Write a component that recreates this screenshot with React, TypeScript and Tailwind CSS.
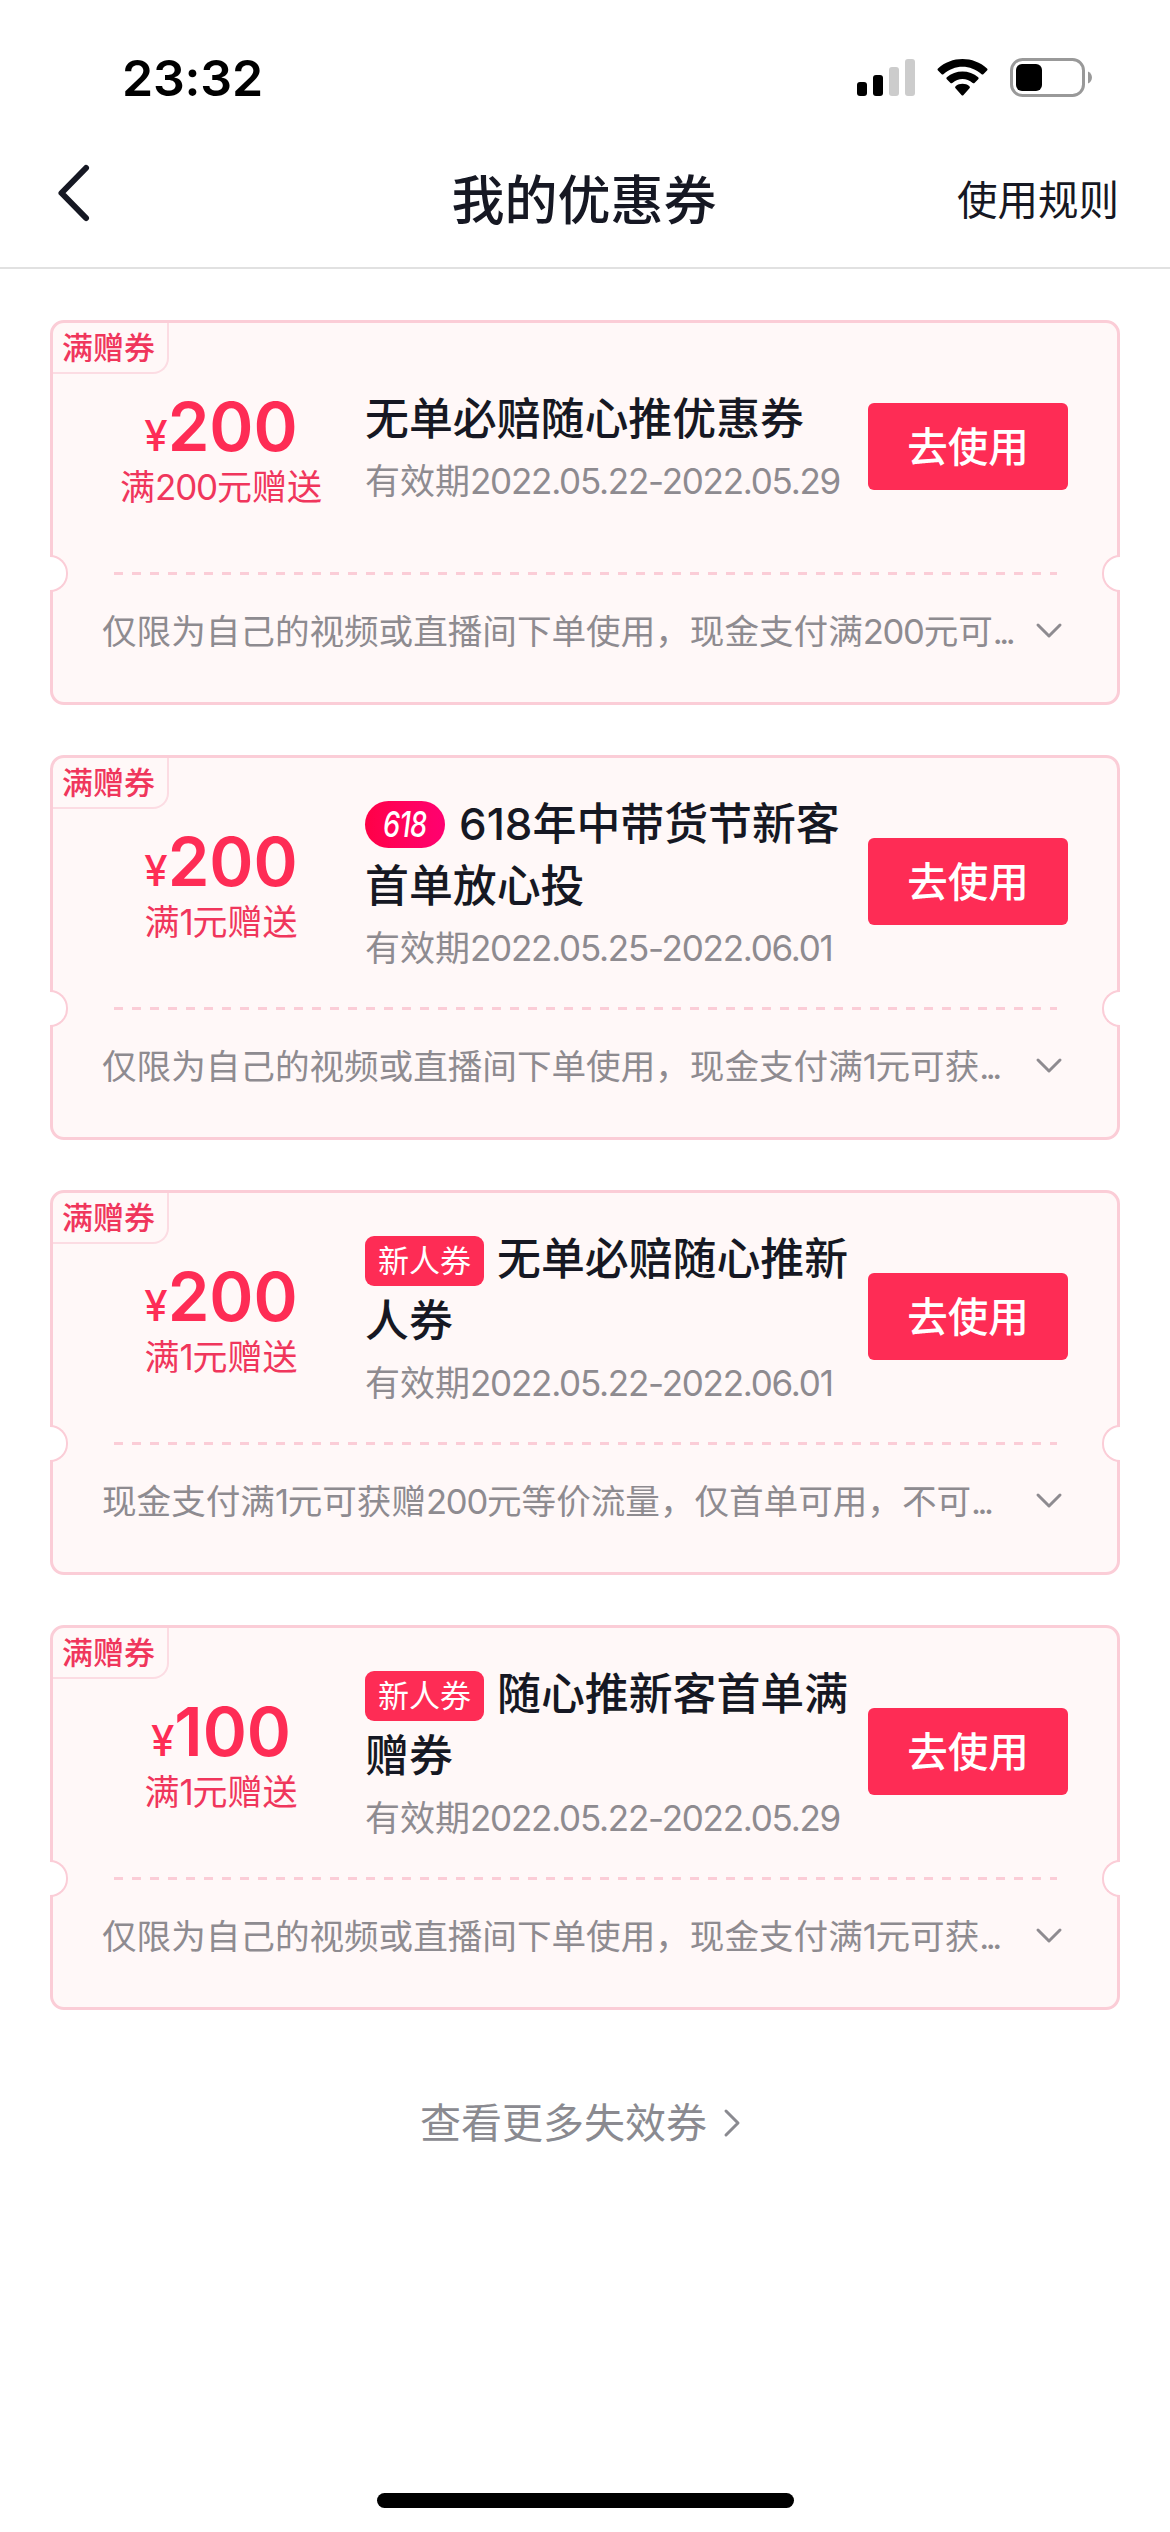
interface Coupon {
  id: number;
  amount: number;
  condition: string;
  badge?: "618" | "new";
  title: string;
  period: string;
  rule: string;
}

const coupons: Coupon[] = [
  {
    id: 1,
    amount: 200,
    condition: "满200元赠送",
    title: "无单必赔随心推优惠券",
    period: "有效期2022.05.22-2022.05.29",
    rule: "仅限为自己的视频或直播间下单使用，现金支付满200元可...",
  },
  {
    id: 2,
    amount: 200,
    condition: "满1元赠送",
    badge: "618",
    title: "618年中带货节新客首单放心投",
    period: "有效期2022.05.25-2022.06.01",
    rule: "仅限为自己的视频或直播间下单使用，现金支付满1元可获...",
  },
  {
    id: 3,
    amount: 200,
    condition: "满1元赠送",
    badge: "new",
    title: "无单必赔随心推新人券",
    period: "有效期2022.05.22-2022.06.01",
    rule: "现金支付满1元可获赠200元等价流量，仅首单可用，不可...",
  },
  {
    id: 4,
    amount: 100,
    condition: "满1元赠送",
    badge: "new",
    title: "随心推新客首单满赠券",
    period: "有效期2022.05.22-2022.05.29",
    rule: "仅限为自己的视频或直播间下单使用，现金支付满1元可获...",
  },
];

// Tightens digits and the ellipsis, which run wide next to Chinese text
function MixedText({ text }: { text: string }) {
  return text.split(/(\.\.\.|[\d.-]+)/).map((part, i) => {
    if (part === "...") {
      return <span key={i} className="tracking-[-3.500px]">{part}</span>;
    }
    if (/^\d/.test(part)) {
      return <span key={i} className="tracking-[-1.250px]">{part}</span>;
    }
    return part;
  });
}

function StatusBar() {
  return (
    <div className="flex h-[134px] items-start justify-between pt-[53px] pr-[78px] pl-[122px]">
      <span className="text-[50px] leading-[50px] font-semibold tracking-[-0.200px] text-black">23:32</span>
      <div className="flex items-start pt-[5px]">
        <svg width="58" height="38" viewBox="0 0 58 38">
          <rect x="0" y="24" width="10" height="14" rx="3" fill="#000" />
          <rect x="16" y="17" width="10" height="21" rx="3" fill="#000" />
          <rect x="32" y="9" width="10" height="29" rx="3" fill="#ccc" />
          <rect x="48" y="1" width="10" height="37" rx="3" fill="#ccc" />
        </svg>
        <svg className="ml-[22px]" width="51" height="39" viewBox="0 0 51 39">
          <path d="M1 10.500C14.500 -2.200 36.500 -2.200 50 10.500Q51 11.500 50 12.500L46.300 16.200Q45.500 17 44.600 16.200C33.500 6.200 17.500 6.200 6.400 16.200Q5.500 17 4.700 16.200L1 12.500Q0 11.500 1 10.500z" />
          <path d="M9.800 19.300C18.500 11.500 32.500 11.500 41.200 19.300Q42.200 20.300 41.200 21.300L37.500 25Q36.600 25.700 35.700 25C29.500 19.700 21.500 19.700 15.300 25Q14.400 25.700 13.500 25L9.800 21.300Q8.800 20.300 9.800 19.300z" />
          <path d="M18.600 28.200C22.500 25 28.500 25 32.400 28.200Q33.500 29.200 32.500 30.200L26.300 37.200Q25.500 38 24.700 37.200L18.500 30.200Q17.500 29.200 18.600 28.200z" />
        </svg>
        <svg className="ml-[22px]" width="82" height="39" viewBox="0 0 82 39">
          <rect x="1.500" y="1.500" width="72" height="36" rx="11" fill="none" stroke="#999" strokeWidth="3" />
          <rect x="6" y="6" width="26" height="27" rx="6" fill="#000" />
          <path d="M78 13.500c5.300 2 5.300 10 0 12z" fill="#999" />
        </svg>
      </div>
    </div>
  );
}

function Header() {
  return (
    <header className="grid h-[135px] grid-cols-3 items-center border-b-[2px] border-[#e1e1e1] pr-[51px] pl-[53px] text-[#161823]">
      <svg className="-mt-[15px]" width="40" height="60" viewBox="0 0 40 60" fill="none" stroke="currentColor" strokeWidth="6" strokeLinecap="round" strokeLinejoin="round">
        <path d="M33 5L8.500 30L33 55" />
      </svg>
      <h1 className="-ml-[4px] text-center text-[53px] leading-[60px] font-medium whitespace-nowrap">我的优惠券</h1>
      <span className="text-right text-[40.500px] leading-[60px]">使用规则</span>
    </header>
  );
}

function Badge({ type }: { type: "618" | "new" }) {
  if (type === "618") {
    return (
      <span className="mr-[14px] inline-flex h-[47px] w-[80px] items-center justify-center rounded-full bg-linear-to-r from-[#ff0046] to-[#ff0070] align-[3px] text-[35px] leading-none font-medium text-white italic">
        <span className="-mx-4 inline-block scale-x-[0.780] tracking-[-1px]">618</span>
      </span>
    );
  }
  return (
    <span className="mr-[13px] inline-flex h-[50px] w-[119px] items-center justify-center rounded-[9px] bg-[#fe2c55] align-[3px] text-[31px] leading-none font-normal text-white">
      新人券
    </span>
  );
}

function CouponCard({ coupon }: { coupon: Coupon }) {
  return (
    <section className="relative h-[385px] rounded-[14px] border-[3px] border-[#fbcdd7] bg-[#fff8f8]">
      <span className="absolute top-0 left-0 flex h-[51px] w-[116px] items-center rounded-br-[16px] border-r-2 border-b-2 border-[#fcdce3] pl-[9px] text-[31px] leading-none font-medium whitespace-nowrap text-[#f0365c]">
        满赠券
      </span>
      <span className="absolute top-[232px] -left-[3px] h-[37px] w-[18px] rounded-r-full border-2 border-l-0 border-[#fbcdd7] bg-white" />
      <span className="absolute top-[232px] -right-[3px] h-[37px] w-[18px] rounded-l-full border-2 border-r-0 border-[#fbcdd7] bg-white" />

      <div className="flex h-[249px]">
        <div className="flex w-[312px] flex-col items-center pt-[71px] pl-[24px]">
          <div className="flex items-baseline leading-[66px] text-[#fe2c55]">
            <span className="text-[42px] font-medium">¥</span>
            <span className="text-[67px] font-semibold">{coupon.amount}</span>
          </div>
          <span className="-mt-[7px] text-[35px] leading-[50px] whitespace-nowrap text-[#f0365c]">
            <MixedText text={coupon.condition} />
          </span>
        </div>
        <div className={coupon.badge ? "w-[503px] pt-[35px]" : "w-[503px] pt-[65px]"}>
          <h2 className="w-[490px] text-[43.900px] leading-[62px] font-medium text-[#161823]">
            {coupon.badge && <Badge type={coupon.badge} />}
            {coupon.title}
          </h2>
          <p className="text-[35px] leading-[62px] whitespace-nowrap text-[#8e8b90]">
            <MixedText text={coupon.period} />
          </p>
        </div>
        <button className="mt-[80px] h-[87px] w-[200px] rounded-[6px] bg-[#fe2c55] pt-[3px] text-[40.500px] font-medium text-white">
          去使用
        </button>
      </div>

      <div className="mr-[60px] ml-[61px] h-[3px] bg-[repeating-linear-gradient(90deg,#fbcdd7_0_9px,transparent_9px_18px)]" />

      <div className="flex items-center justify-between pt-[29px] pr-[53px] pl-[49px] text-[#8e8b90]">
        <p className="text-[34.600px] leading-[54px] whitespace-nowrap">
          <MixedText text={coupon.rule} />
        </p>
        <svg width="30" height="20" viewBox="0 0 30 20" fill="none" stroke="currentColor" strokeWidth="3" strokeLinecap="round" strokeLinejoin="round">
          <path d="M4 4L15 15L26 4" />
        </svg>
      </div>
    </section>
  );
}

export default function App() {
  return (
    <div className="flex h-[2532px] w-[1170px] flex-col overflow-hidden bg-white font-['Inter','Noto_Sans_CJK_SC',sans-serif]">
      <StatusBar />
      <Header />
      <main className="flex flex-col gap-[50px] px-[50px] pt-[51px]">
        {coupons.map((coupon) => (
          <CouponCard key={coupon.id} coupon={coupon} />
        ))}
      </main>
      <a className="mt-[83px] flex items-center justify-center text-[41px] leading-[60px] text-[#8a8a90]">
        查看更多失效券
        <svg className="mr-[8px] ml-[15px]" width="20" height="32" viewBox="0 0 20 32" fill="none" stroke="currentColor" strokeWidth="3" strokeLinecap="round" strokeLinejoin="round">
          <path d="M4 4L16 16L4 28" />
        </svg>
      </a>
      <div className="mx-auto mt-auto mb-[24px] h-[15px] w-[417px] rounded-full bg-black" />
    </div>
  );
}
